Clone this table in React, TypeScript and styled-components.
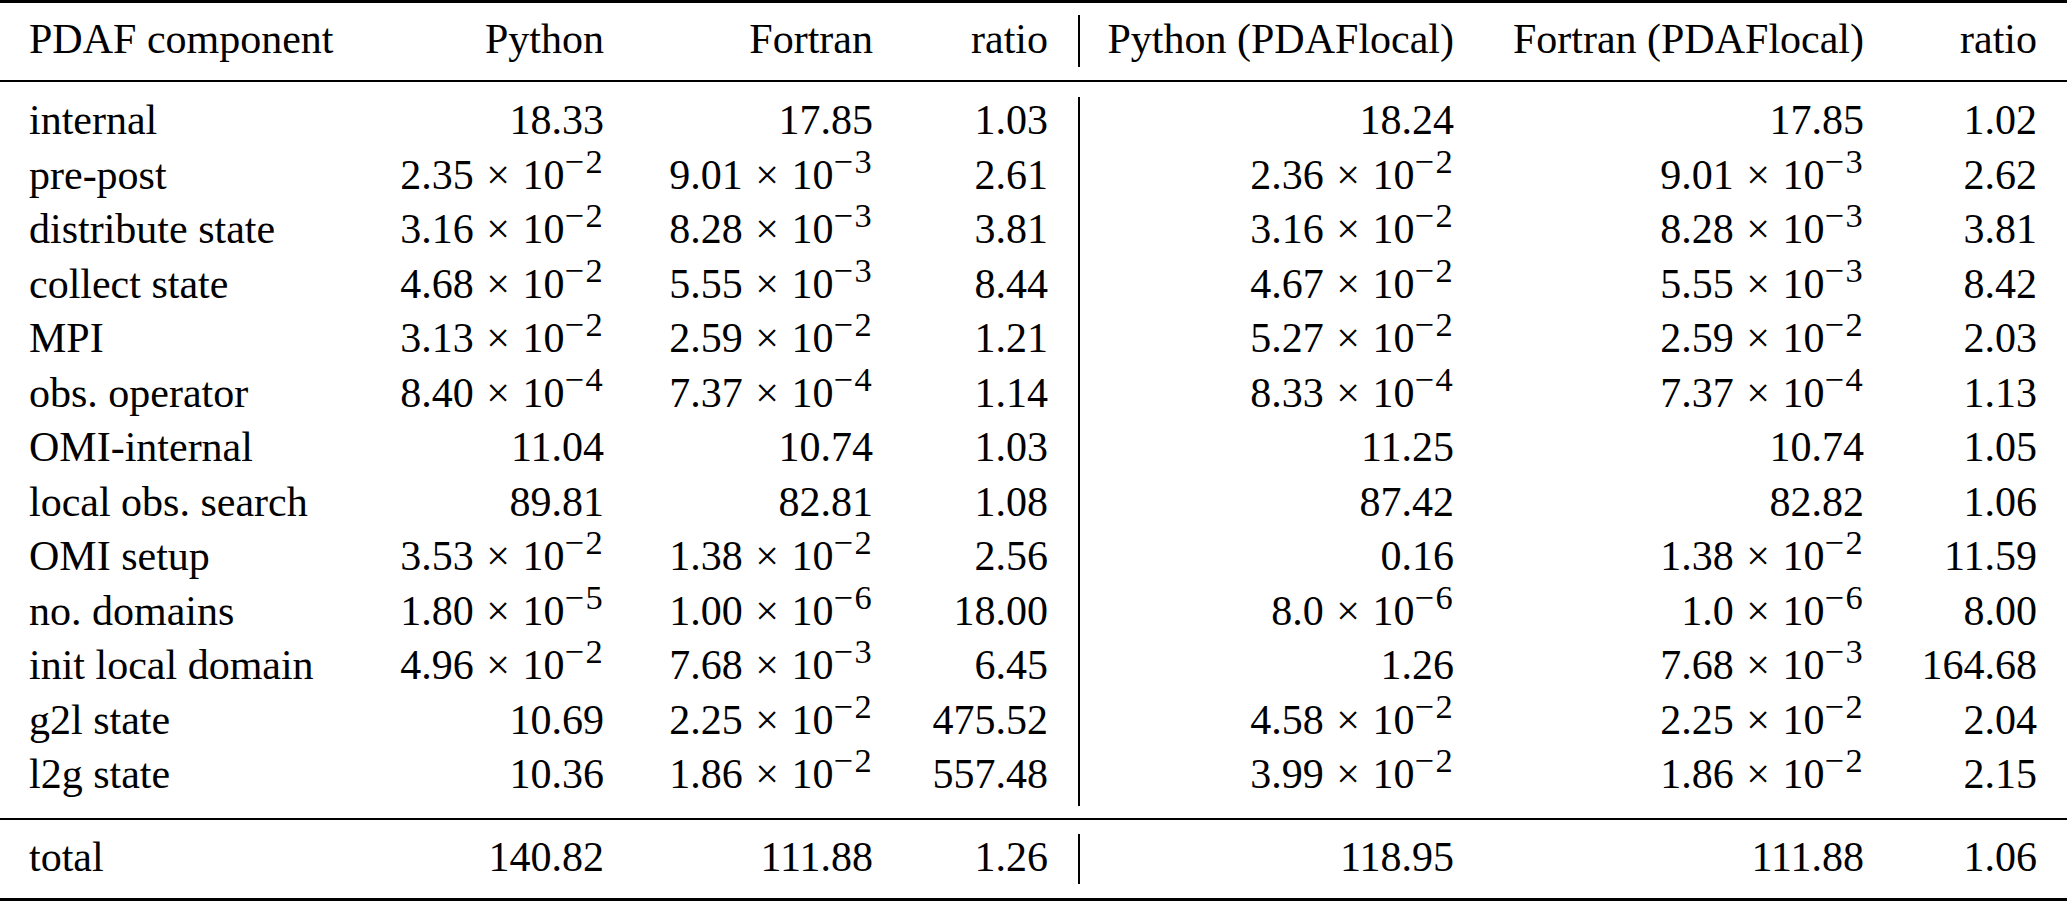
import styled, { createGlobalStyle } from 'styled-components';

// --- Global ---
const GlobalStyle = createGlobalStyle`
  html, body {
    margin: 0;
    padding: 0;
    background: #fff;
  }
  body {
    font-family: "Liberation Serif", "Times New Roman", serif;
    color: #000;
  }
`;

// column widths, from left edge to right edge of the table
const COLUMNS = '350px 284px 269px 175px 406px 410px 173px';

// --- Styled Components ---
const TableWrapper = styled.div`
  width: 2067px;
  font-size: 42px;
  line-height: 1.15;
`;

const Rule = styled.div<{ $weight: number }>`
  height: ${({ $weight }) => $weight}px;
  background: #000;
`;

const Section = styled.div<{ $padTop: number; $padBottom: number; $rowHeight: number }>`
  display: grid;
  grid-template-columns: ${COLUMNS};
  grid-auto-rows: ${({ $rowHeight }) => $rowHeight}px;
  padding: ${({ $padTop }) => $padTop}px 0 ${({ $padBottom }) => $padBottom}px;
`;

const Cell = styled.div<{ $label?: boolean; $divider?: boolean; $lift: number }>`
  display: flex;
  align-items: center;
  justify-content: ${({ $label }) => ($label ? 'flex-start' : 'flex-end')};
  padding: 0 30px ${({ $lift }) => $lift}px ${({ $label }) => ($label ? 29 : 30)}px;
  border-left: ${({ $divider }) => ($divider ? '2px solid #000' : 'none')};
  white-space: nowrap;
`;

const Sci = styled.span`
  white-space: nowrap;
`;

const Times = styled.span`
  margin: 0 0.3em;
`;

const Exponent = styled.span`
  font-size: 0.82em;
  line-height: 0;
  letter-spacing: 0.04em;
  vertical-align: 0.47em;
`;

// --- Data ---
const header = ['PDAF component', 'Python', 'Fortran', 'ratio', 'Python (PDAFlocal)', 'Fortran (PDAFlocal)', 'ratio'];

const rows: string[][] = [
  ['internal', '18.33', '17.85', '1.03', '18.24', '17.85', '1.02'],
  ['pre-post', '2.35e-2', '9.01e-3', '2.61', '2.36e-2', '9.01e-3', '2.62'],
  ['distribute state', '3.16e-2', '8.28e-3', '3.81', '3.16e-2', '8.28e-3', '3.81'],
  ['collect state', '4.68e-2', '5.55e-3', '8.44', '4.67e-2', '5.55e-3', '8.42'],
  ['MPI', '3.13e-2', '2.59e-2', '1.21', '5.27e-2', '2.59e-2', '2.03'],
  ['obs. operator', '8.40e-4', '7.37e-4', '1.14', '8.33e-4', '7.37e-4', '1.13'],
  ['OMI-internal', '11.04', '10.74', '1.03', '11.25', '10.74', '1.05'],
  ['local obs. search', '89.81', '82.81', '1.08', '87.42', '82.82', '1.06'],
  ['OMI setup', '3.53e-2', '1.38e-2', '2.56', '0.16', '1.38e-2', '11.59'],
  ['no. domains', '1.80e-5', '1.00e-6', '18.00', '8.0e-6', '1.0e-6', '8.00'],
  ['init local domain', '4.96e-2', '7.68e-3', '6.45', '1.26', '7.68e-3', '164.68'],
  ['g2l state', '10.69', '2.25e-2', '475.52', '4.58e-2', '2.25e-2', '2.04'],
  ['l2g state', '10.36', '1.86e-2', '557.48', '3.99e-2', '1.86e-2', '2.15'],
];

const total = ['total', '140.82', '111.88', '1.26', '118.95', '111.88', '1.06'];

// --- Sub-Components ---
function Value({ text }: { text: string }) {
  // "2.35e-2" -> 2.35 × 10^−2
  if (!text.includes('e')) return <Sci>{text}</Sci>;
  const [mantissa, exp] = text.split('e');
  return (
    <Sci>
      {mantissa}
      <Times>×</Times>
      10
      <Exponent>{exp.replace('-', '\u2212')}</Exponent>
    </Sci>
  );
}

function Row({ cells, lift }: { cells: string[]; lift: number }) {
  return (
    <>
      {cells.map((c, i) => (
        <Cell key={i} $label={i === 0} $divider={i === 4} $lift={lift}>
          {i === 0 ? c : <Value text={c} />}
        </Cell>
      ))}
    </>
  );
}

// --- Main Component ---
export default function App() {
  return (
    <>
      <GlobalStyle />
      <TableWrapper>
        <Rule $weight={3} />
        <Section $padTop={12} $padBottom={13} $rowHeight={52}>
          <Row cells={header} lift={3} />
        </Section>
        <Rule $weight={2} />
        <Section $padTop={15} $padBottom={12} $rowHeight={54.5}>
          {rows.map((r) => (
            <Row key={r[0]} cells={r} lift={8} />
          ))}
        </Section>
        <Rule $weight={2} />
        <Section $padTop={14} $padBottom={14} $rowHeight={50}>
          <Row cells={total} lift={3} />
        </Section>
        <Rule $weight={3} />
      </TableWrapper>
    </>
  );
}
